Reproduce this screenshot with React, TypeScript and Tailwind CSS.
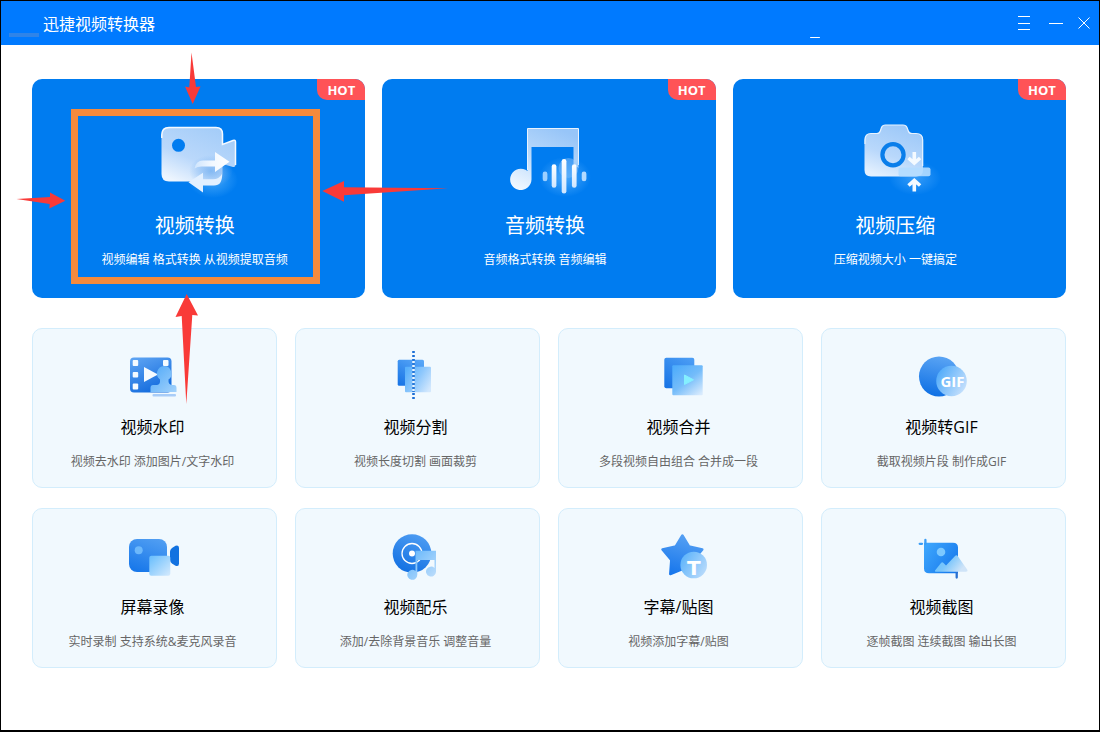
import React from 'react';

interface Feature {
  title: string;
  description: string;
  icon: React.ReactNode;
  highlighted?: boolean;
}

const ConvertIcon: React.FC = () => (
  <svg className="w-[100px] h-20" viewBox="0 0 100 80" aria-hidden="true">
    <defs>
      <linearGradient id="cv-body" x1="0.8" y1="0" x2="0.2" y2="1">
        <stop offset="0" stopColor="#a3ccf8" />
        <stop offset="0.6" stopColor="#bad8fb" />
        <stop offset="1" stopColor="#edf5fe" />
      </linearGradient>
      <linearGradient id="cv-arrow" x1="0" y1="0" x2="1" y2="0">
        <stop offset="0" stopColor="#cfe5fd" />
        <stop offset="0.5" stopColor="#f2f8ff" />
        <stop offset="1" stopColor="#ffffff" />
      </linearGradient>
      <radialGradient id="cv-glow">
        <stop offset="0" stopColor="#6cc0ff" stopOpacity="0.6" />
        <stop offset="1" stopColor="#6cc0ff" stopOpacity="0" />
      </radialGradient>
      <radialGradient id="cv-shade">
        <stop offset="0" stopColor="#7db5f2" stopOpacity="0.9" />
        <stop offset="1" stopColor="#7db5f2" stopOpacity="0" />
      </radialGradient>
    </defs>
    <ellipse cx="68" cy="60" rx="25" ry="18" fill="url(#cv-glow)" />
    <path
      d="M24 7.5H71Q77.5 7.5 77.5 14V24.5L88 20.5Q90.5 19.6 90.5 22V45Q90.5 47.5 88 47L77.5 44V54Q77.5 61.5 70 61.5H24Q16.5 61.5 16.5 54V15Q16.5 7.5 24 7.5Z"
      fill="url(#cv-body)"
    />
    <path
      d="M16.8 18V15Q16.8 7.5 24 7.5H71Q77.5 7.5 77.5 14V24.5L88 20.5Q90.5 19.6 90.5 22V45"
      fill="none"
      stroke="#f4f9ff"
      strokeWidth="1.5"
    />
    <circle cx="33.5" cy="25.3" r="6.5" fill="#007cf0" />
    <ellipse cx="66" cy="51" rx="22" ry="16" fill="url(#cv-shade)" />
    <path d="M49.5 48.5Q51 40.5 58 40.5H70V32L84.5 41.8L70 52V46.5H58Q53 46 49.5 48.5Z" fill="url(#cv-arrow)" />
    <path d="M77 54Q77.5 65.5 69 65.5H58V72.5L43.5 62.3L58 52.7V59.3H68Q74 59.3 77 54Z" fill="#e3f0ff" />
  </svg>
);

const AudioIcon: React.FC = () => (
  <svg className="w-[100px] h-20" viewBox="0 0 100 80" aria-hidden="true">
    <defs>
      <linearGradient id="au-note" x1="0.7" y1="0" x2="0.2" y2="1">
        <stop offset="0" stopColor="#97c5f8" />
        <stop offset="0.5" stopColor="#b9d9fb" />
        <stop offset="1" stopColor="#f0f7ff" />
      </linearGradient>
      <radialGradient id="au-glow">
        <stop offset="0" stopColor="#63b6ff" stopOpacity="0.75" />
        <stop offset="1" stopColor="#63b6ff" stopOpacity="0" />
      </radialGradient>
      <linearGradient id="au-bar" x1="0" y1="0" x2="0" y2="1">
        <stop offset="0" stopColor="#ffffff" />
        <stop offset="1" stopColor="#cfe6ff" />
      </linearGradient>
    </defs>
    <circle cx="73.5" cy="48" r="10" fill="#6fb2f6" opacity="0.6" />
    <path
      d="M33.5 8H82Q83.5 8 83.5 9.5V48L78.5 44V27H36.5V59.5A10.7 10.7 0 1 1 32.5 51V9.5Q32.5 8 33.5 8Z"
      fill="url(#au-note)"
    />
    <path d="M32.5 50V8.5H83.5V45" fill="none" stroke="#e8f3ff" strokeWidth="1" />
    <ellipse cx="70" cy="57" rx="26" ry="20" fill="url(#au-glow)" />
    <g fill="url(#au-bar)">
      <rect x="47.7" y="51.5" width="4.7" height="9.8" rx="2.3" fill="#9dd0ff" />
      <rect x="56.7" y="44.3" width="4.7" height="23.5" rx="2.3" />
      <rect x="66.7" y="39" width="4.7" height="34.5" rx="2.3" />
      <rect x="76.9" y="44.3" width="4.7" height="23.5" rx="2.3" />
      <rect x="86.7" y="51.5" width="4.7" height="9.8" rx="2.3" fill="#b3daff" />
    </g>
  </svg>
);

const CompressIcon: React.FC = () => (
  <svg className="w-[100px] h-20" viewBox="0 0 100 80" aria-hidden="true">
    <defs>
      <linearGradient id="cp-body" x1="0.7" y1="0" x2="0.3" y2="1">
        <stop offset="0" stopColor="#9cc8f8" />
        <stop offset="0.6" stopColor="#b9d8fb" />
        <stop offset="1" stopColor="#e3f0fe" />
      </linearGradient>
      <radialGradient id="cp-glow">
        <stop offset="0" stopColor="#57b0ff" stopOpacity="0.6" />
        <stop offset="1" stopColor="#57b0ff" stopOpacity="0" />
      </radialGradient>
    </defs>
    <ellipse cx="70" cy="58" rx="26" ry="17" fill="url(#cp-glow)" />
    <path
      d="M26 13.5H32Q34.5 13.5 35.3 11L36.5 7.5Q37.5 5 40.5 5H58Q61 5 62 7.5L63.3 11Q64 13.5 67 13.5H71Q78 13.5 78 20V50Q78 56.5 71 56.5H26Q19.5 56.5 19.5 50V20Q19.5 13.5 26 13.5Z"
      fill="url(#cp-body)"
    />
    <path
      d="M20 24V20Q20 13.5 26 13.5H32Q34.5 13.5 35.3 11L36.5 7.5Q37.5 5 40.5 5H58Q61 5 62 7.5L63.3 11Q64 13.5 67 13.5H71Q77.7 13.5 77.7 20V46"
      fill="none"
      stroke="#e8f3ff"
      strokeWidth="1.2"
    />
    <circle cx="48" cy="34.7" r="10.6" fill="none" stroke="#0a7eea" strokeWidth="4.2" />
    <rect x="53.5" y="47.5" width="32" height="8.8" rx="2" fill="#b2dbff" opacity="0.9" />
    <g fill="none" stroke="#f4faff" strokeWidth="3.6">
      <path d="M69.3 32V42M63.5 38L69.3 43L75.1 38" />
      <path d="M69.3 71.5V61M63.5 65.5L69.3 60.5L75.1 65.5" />
    </g>
  </svg>
);

const WatermarkIcon: React.FC = () => (
  <svg className="w-[61px] h-[50px]" viewBox="0 0 61 50" aria-hidden="true">
    <defs>
      <linearGradient id="wm-film" x1="0.2" y1="0" x2="0.7" y2="1">
        <stop offset="0" stopColor="#5ba2f2" />
        <stop offset="1" stopColor="#0f68dc" />
      </linearGradient>
      <linearGradient id="wm-stamp" x1="0" y1="0" x2="1" y2="1">
        <stop offset="0" stopColor="#4ea8f8" />
        <stop offset="1" stopColor="#a3d2fb" />
      </linearGradient>
    </defs>
    <rect x="6" y="6.5" width="41.5" height="35" rx="4" fill="url(#wm-film)" />
    <g fill="#f5fbff">
      <rect x="8.7" y="9" width="5.5" height="6" rx="1" />
      <rect x="8.7" y="21" width="5.5" height="5.5" rx="1" />
      <rect x="8.7" y="32.5" width="5.5" height="6" rx="1" />
      <rect x="39" y="9" width="5.5" height="6" rx="1" />
      <path d="M20 16L34 23.5L20 31Z" />
    </g>
    <path
      d="M40 15A7.5 7.5 0 0 1 44.5 28.500Q44 33.5 48 34H50Q52.5 34 52.5 37V41H26.5V37Q26.5 34 29 34H33Q36.5 33.5 36 28.5A7.5 7.5 0 0 1 40 15Z"
      fill="url(#wm-stamp)"
    />
    <rect x="28.5" y="43" width="23.5" height="2.5" rx="1" fill="#a9cdf8" />
  </svg>
);

const SplitIcon: React.FC = () => (
  <svg className="w-[61px] h-[50px]" viewBox="0 0 61 50" aria-hidden="true">
    <defs>
      <linearGradient id="sp-back" x1="0.8" y1="0" x2="0.2" y2="1">
        <stop offset="0" stopColor="#58a6f7" />
        <stop offset="1" stopColor="#1a76e6" />
      </linearGradient>
      <linearGradient id="sp-front" x1="0" y1="0.2" x2="1" y2="0.8">
        <stop offset="0" stopColor="#58b0fc" />
        <stop offset="0.5" stopColor="#8fc8fc" />
        <stop offset="1" stopColor="#d3e8fd" />
      </linearGradient>
    </defs>
    <rect x="10.7" y="8.7" width="26.3" height="26" rx="1.5" fill="url(#sp-back)" />
    <rect x="18" y="15.7" width="26" height="25.5" rx="1" fill="url(#sp-front)" />
    <path d="M26.5 8.5V41" stroke="#2778d8" strokeWidth="2.6" />
    <path d="M26.5 10V41" stroke="#e9f5ff" strokeWidth="2.6" strokeDasharray="2 2" />
    <path d="M26.5 0V9M26.5 42V50" stroke="#1c6fd6" strokeWidth="2.6" strokeDasharray="2 2" />
  </svg>
);

const MergeIcon: React.FC = () => (
  <svg className="w-[61px] h-[50px]" viewBox="0 0 61 50" aria-hidden="true">
    <defs>
      <linearGradient id="mg-back" x1="0.8" y1="0" x2="0.2" y2="1">
        <stop offset="0" stopColor="#4a9cf4" />
        <stop offset="1" stopColor="#1a76e6" />
      </linearGradient>
      <linearGradient id="mg-front" x1="0.1" y1="0" x2="0.9" y2="1">
        <stop offset="0" stopColor="#4dacfb" />
        <stop offset="0.5" stopColor="#74bcfa" />
        <stop offset="1" stopColor="#d9ebfd" />
      </linearGradient>
    </defs>
    <rect x="14.3" y="6.7" width="30" height="30.5" rx="2" fill="url(#mg-back)" />
    <rect x="22.3" y="14.3" width="30.4" height="30" rx="1" fill="url(#mg-front)" />
    <path d="M34.5 24V33.5L43.5 28.8Z" fill="#84efff" stroke="#84efff" strokeLinejoin="round" />
  </svg>
);

const GifIcon: React.FC = () => (
  <svg className="w-[61px] h-[50px]" viewBox="0 0 61 50" aria-hidden="true">
    <defs>
      <linearGradient id="gf-back" x1="0.6" y1="0" x2="0.4" y2="1">
        <stop offset="0" stopColor="#5aa4f4" />
        <stop offset="1" stopColor="#0f70e4" />
      </linearGradient>
      <linearGradient id="gf-front" x1="0" y1="0.2" x2="1" y2="0.8">
        <stop offset="0" stopColor="#4ba9fa" />
        <stop offset="1" stopColor="#cce3fc" />
      </linearGradient>
    </defs>
    <circle cx="26" cy="25.5" r="20" fill="url(#gf-back)" />
    <circle cx="38.5" cy="30" r="15.3" fill="url(#gf-front)" />
    <text x="27.5" y="36" fontSize="15" fontWeight="700" fill="#ffffff">
      GIF
    </text>
  </svg>
);

const RecordIcon: React.FC = () => (
  <svg className="w-[61px] h-[50px]" viewBox="0 0 61 50" aria-hidden="true">
    <defs>
      <linearGradient id="rc-body" x1="0.7" y1="0" x2="0.3" y2="1">
        <stop offset="0" stopColor="#4f9df2" />
        <stop offset="1" stopColor="#1878ea" />
      </linearGradient>
      <linearGradient id="rc-front" x1="0" y1="0" x2="1" y2="1">
        <stop offset="0" stopColor="#66bdfd" />
        <stop offset="1" stopColor="#d5eafd" />
      </linearGradient>
    </defs>
    <rect x="5" y="8" width="38" height="33" rx="8" fill="url(#rc-body)" />
    <circle cx="14.7" cy="19.3" r="4" fill="#6cb8fb" />
    <path d="M46 20.5Q46 18.5 48 17L51.5 14.8Q55 13.5 55 17V32.5Q55 36 51.5 34.7L48 32.5Q46 31 46 29Z" fill="#1272e0" />
    <rect x="25.3" y="24.7" width="21" height="20" rx="2" fill="url(#rc-front)" />
  </svg>
);

const MusicIcon: React.FC = () => (
  <svg className="w-[61px] h-[50px]" viewBox="0 0 61 50" aria-hidden="true">
    <defs>
      <linearGradient id="ms-disc" x1="0.7" y1="0" x2="0.3" y2="1">
        <stop offset="0" stopColor="#4d9cf2" />
        <stop offset="1" stopColor="#1270e2" />
      </linearGradient>
      <linearGradient id="ms-note" x1="0" y1="0" x2="1" y2="1">
        <stop offset="0" stopColor="#5db3fb" />
        <stop offset="1" stopColor="#c3e0fb" />
      </linearGradient>
    </defs>
    <circle cx="25" cy="22.5" r="19.3" fill="url(#ms-disc)" />
    <circle cx="25" cy="22.5" r="10" fill="none" stroke="#ffffff" strokeWidth="1.3" />
    <circle cx="25" cy="22.5" r="3" fill="#ffffff" />
    <path
      d="M28.5 19.7H49V41A5 5 0 1 1 47.5 37V29H30.3V43.7A5 5 0 1 1 28.5 40Z"
      fill="url(#ms-note)"
    />
  </svg>
);

const StickerIcon: React.FC = () => (
  <svg className="w-[61px] h-[50px]" viewBox="0 0 61 50" aria-hidden="true">
    <defs>
      <linearGradient id="st-star" x1="0.6" y1="0" x2="0.3" y2="1">
        <stop offset="0" stopColor="#55a0f3" />
        <stop offset="1" stopColor="#1877ec" />
      </linearGradient>
      <linearGradient id="st-disc" x1="0" y1="0.2" x2="1" y2="0.8">
        <stop offset="0" stopColor="#5bb3fb" />
        <stop offset="1" stopColor="#bcdcfb" />
      </linearGradient>
    </defs>
    <path
      d="M32.4 4.5L39 15.5L52.3 18.5L43.5 29L44.5 43L32.4 38L20.3 43L21.3 29L12.5 18.5L25.8 15.5Z"
      fill="url(#st-star)"
      stroke="url(#st-star)"
      strokeWidth="2.5"
      strokeLinejoin="round"
    />
    <circle cx="43.7" cy="34" r="13.3" fill="url(#st-disc)" />
    <text className="font-['DejaVu_Sans',sans-serif]" x="43.9" y="43.5" fontSize="20" fontWeight="700" textAnchor="middle" fill="#ffffff">
      T
    </text>
  </svg>
);

const ScreenshotIcon: React.FC = () => (
  <svg className="w-[61px] h-[50px]" viewBox="0 0 61 50" aria-hidden="true">
    <defs>
      <linearGradient id="ss-body" x1="0" y1="0.2" x2="1" y2="0.8">
        <stop offset="0" stopColor="#3da5fc" />
        <stop offset="1" stopColor="#1678ec" />
      </linearGradient>
      <linearGradient id="ss-hill" x1="0" y1="0" x2="1" y2="0.4">
        <stop offset="0" stopColor="#5cc0ff" />
        <stop offset="0.5" stopColor="#7cc6fb" />
        <stop offset="1" stopColor="#cfe4f8" />
      </linearGradient>
    </defs>
    <path d="M11 11.7H40Q45 11.7 45 16.5V42.3H16Q11 42.3 11 37.5Z" fill="url(#ss-body)" />
    <g strokeWidth="2.3" strokeLinecap="round">
      <path d="M6.7 12.8H9M12.4 9V13" stroke="#3b9df5" />
      <path d="M43.7 42V46.5" stroke="#2a70d0" />
    </g>
    <circle cx="28" cy="21" r="4.3" fill="#7cc8ff" />
    <path
      d="M22 39.5L28 32Q29.2 30.7 30.5 32L33 34.5L42 25Q43.7 23.5 45 25.5L54.5 39Q55 40.7 53 40.7H23Q21.5 40.7 22 39.5Z"
      fill="url(#ss-hill)"
    />
  </svg>
);

const mainFeatures: Feature[] = [
  { title: '视频转换', description: '视频编辑 格式转换 从视频提取音频', icon: <ConvertIcon />, highlighted: true },
  { title: '音频转换', description: '音频格式转换 音频编辑', icon: <AudioIcon /> },
  { title: '视频压缩', description: '压缩视频大小 一键搞定', icon: <CompressIcon /> }
];

const tools: Feature[] = [
  { title: '视频水印', description: '视频去水印 添加图片/文字水印', icon: <WatermarkIcon /> },
  { title: '视频分割', description: '视频长度切割 画面裁剪', icon: <SplitIcon /> },
  { title: '视频合并', description: '多段视频自由组合 合并成一段', icon: <MergeIcon /> },
  { title: '视频转GIF', description: '截取视频片段 制作成GIF', icon: <GifIcon /> },
  { title: '屏幕录像', description: '实时录制 支持系统&麦克风录音', icon: <RecordIcon /> },
  { title: '视频配乐', description: '添加/去除背景音乐 调整音量', icon: <MusicIcon /> },
  { title: '字幕/贴图', description: '视频添加字幕/贴图', icon: <StickerIcon /> },
  { title: '视频截图', description: '逐帧截图 连续截图 输出长图', icon: <ScreenshotIcon /> }
];

const TitleBar: React.FC = () => (
  <header className="relative flex h-11 items-center justify-between bg-[#007aff] pl-2 pr-[2px] text-white">
    <div className="flex h-full items-center gap-1">
      <span className="mb-2 h-1 w-[30px] self-end bg-[#2f84e8]" />
      <h1 className="pt-[2px] text-base leading-6">迅捷视频转换器</h1>
    </div>
    <span className="absolute bottom-[7px] right-[279px] h-px w-[10px] rounded-full bg-white" />
    <div className="flex h-full">
      <button type="button" aria-label="菜单" className="flex w-[34px] items-center justify-center">
        <svg className="h-[14px] w-3" viewBox="0 0 12 14" stroke="currentColor">
          <path d="M0 0.5H12M0 7.5H12M0 13.5H12" />
        </svg>
      </button>
      <button type="button" aria-label="最小化" className="flex w-[30px] items-center justify-center">
        <svg className="h-[14px] w-[14px]" viewBox="0 0 14 14" stroke="currentColor">
          <path d="M0 7.5H14" />
        </svg>
      </button>
      <button type="button" aria-label="关闭" className="flex w-[26px] items-center justify-center">
        <svg className="h-3 w-3" viewBox="0 0 12 12" stroke="currentColor">
          <path d="M0.5 0.5L11.5 11.5M11.5 0.5L0.5 11.5" />
        </svg>
      </button>
    </div>
  </header>
);

const MainCard: React.FC<{ feature: Feature }> = ({ feature }) => (
  <button
    type="button"
    className="relative flex flex-col items-center rounded-[10px] bg-[#007cf0] pt-[41px] pr-2 pb-7 text-white"
  >
    <span className="absolute top-0 right-0 h-[21px] w-12 rounded-tr-[10px] rounded-bl-[10px] bg-[#ff5357] text-center text-[13px] leading-[22px] font-bold">
      HOT
    </span>
    {feature.icon}
    <span className="mt-3 text-xl leading-7">{feature.title}</span>
    <span className="mt-[10px] text-xs leading-5">{feature.description}</span>
    {feature.highlighted && (
      <span className="absolute top-[30px] right-[45px] bottom-[14px] left-[39px] border-[7px] border-[#f58a3c]" />
    )}
  </button>
);

const ToolCard: React.FC<{ feature: Feature }> = ({ feature }) => (
  <button
    type="button"
    className="flex flex-col items-center rounded-[10px] border border-[#d3edfc] bg-[#f1f9fe] pt-[22px] pb-[15px]"
  >
    {feature.icon}
    <span className="mt-[14px] pr-1 text-base leading-6 text-black">{feature.title}</span>
    <span className="mt-[13px] pr-1 text-xs leading-5 text-[#666666]">{feature.description}</span>
  </button>
);

// Four hand-drawn arrows pointing at the first card
const Arrows: React.FC = () => (
  <svg
    className="pointer-events-none absolute -top-px -left-px h-[410px] w-[460px]"
    viewBox="0 0 460 410"
    fill="#f93a38"
    aria-hidden="true"
  >
    <path d="M191.5 52.5L196 87L200.5 86.5L192.7 104L185 86.5L189.3 87.5Z" />
    <path d="M16.5 199L50 197L50 192.5L65.3 200.7L49.3 208.5L49.7 204Z" />
    <path d="M448 188.3L344 187.3V181L322.3 191L344 201.8V195.3Z" />
    <path d="M186.7 294L198 315.5L192.3 315L186.3 404L181.7 316L175.5 317Z" />
  </svg>
);

const App: React.FC = () => {
  return (
    <div className="relative min-h-screen border border-b-2 border-black bg-white font-['Open_Sans','Noto_Sans_CJK_SC',sans-serif]">
      <TitleBar />
      <main className="pt-[34px] pr-[33px] pb-10 pl-[31px]">
        <section className="grid grid-cols-3 gap-[17px]">
          {mainFeatures.map((feature) => (
            <MainCard key={feature.title} feature={feature} />
          ))}
        </section>
        <section className="mt-[30px] grid grid-cols-4 gap-x-[18px] gap-y-5">
          {tools.map((feature) => (
            <ToolCard key={feature.title} feature={feature} />
          ))}
        </section>
      </main>
      <Arrows />
    </div>
  );
};

export default App;
